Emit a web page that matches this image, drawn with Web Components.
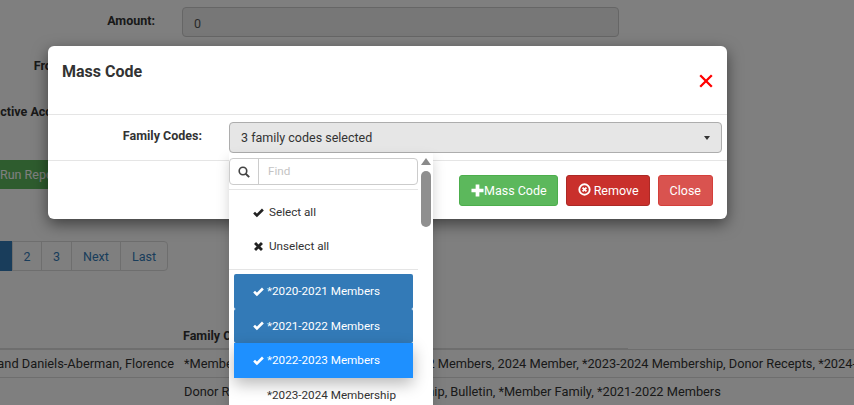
<!DOCTYPE html>
<html><head><meta charset="utf-8">
<style>
html,body{margin:0;padding:0;height:405px;width:854px;overflow:hidden;background:#fff;font-family:Roboto,"Liberation Sans",sans-serif;font-size:12.5px;color:#333}
</style></head><body>
<mc-app>
  <mc-page>
    <mc-form-row label="Amount:" top="7"><mc-field>0</mc-field></mc-form-row>
    <mc-form-row label="From Family Groups:" top="15" nudge="5"></mc-form-row>
    <mc-form-row label="Inactive Accounts To Include:" top="17" nudge="7"></mc-form-row>
    <mc-run-button>Run Report</mc-run-button>
    <mc-pagination></mc-pagination>
    <mc-results></mc-results>
  </mc-page>
  <mc-backdrop></mc-backdrop>
  <mc-modal heading="Mass Code"></mc-modal>
</mc-app>
<script>
const ICONS={
 ok:'<path d="M1.4 7.2 5 10.8 12.6 3.2" fill="none" stroke="currentColor" stroke-width="3.3"/>',
 x:'<path d="M2.6 2.6 11.4 11.4M11.4 2.6 2.6 11.4" fill="none" stroke="currentColor" stroke-width="3.6"/>',
 close:'<path d="M1.2 1.2 12.8 12.8M12.8 1.2 1.2 12.8" fill="none" stroke="currentColor" stroke-width="2.3"/>',
 search:'<circle cx="5.8" cy="5.8" r="4.4" fill="none" stroke="currentColor" stroke-width="1.9"/><path d="M8.9 8.9 13 13" stroke="currentColor" stroke-width="2.4"/>',
 plus:'<path d="M7 0.5V13.5M0.5 7H13.5" fill="none" stroke="currentColor" stroke-width="4"/>',
 rc:'<circle cx="7" cy="7" r="5.6" fill="none" stroke="currentColor" stroke-width="2"/><path d="M4.9 4.9 9.1 9.1M9.1 4.9 4.9 9.1" stroke="currentColor" stroke-width="1.9"/>'
};
function def(name,css,html,init){
  customElements.define(name,class extends HTMLElement{
    constructor(){super();this.attachShadow({mode:'open'});}
    connectedCallback(){
      const a=n=>this.getAttribute(n);
      this.shadowRoot.innerHTML='<style>'+css+'</style>'+(typeof html==='function'?html(a):html);
      if(init)init(this,a);
    }
  });
}
def('mc-icon',':host{display:inline-flex;flex:none}svg{display:block;width:100%;height:100%}',
  a=>`<svg viewBox="0 0 14 14" aria-hidden="true">${ICONS[a('name')]}</svg>`);
def('mc-app',':host{display:block;position:relative;width:854px;height:405px;overflow:hidden}','<slot></slot>');
def('mc-page',':host{display:flex;flex-direction:column;height:405px}','<slot></slot>');
def('mc-form-row',`:host{display:grid;grid-template-columns:155px 437px;column-gap:27px;height:30px;align-items:start}
 .l{font-weight:700;white-space:nowrap;line-height:27px}
 .w{display:flex;justify-content:flex-end;width:155px}`,
  a=>`<div class="w"><div class="l" style="padding-right:${a('nudge')||0}px">${a('label')}</div></div><div><slot></slot></div>`,
  (e,a)=>{e.style.marginTop=a('top')+'px';});
def('mc-field',':host{display:block;box-sizing:border-box;height:30px;padding:0 11px;line-height:31px;background:#eee;border:1px solid #ccc;border-radius:4px;color:#555}','<slot></slot>');
def('mc-run-button',`:host{display:flex;align-items:center;box-sizing:border-box;width:110px;height:30px;margin:32px 0 0 -12px;padding-left:12px;background:#5cb85c;color:#fff;border-radius:3px;white-space:nowrap}`,'<slot></slot>');
def('mc-pagination',`:host{display:flex;height:30px;margin-top:52px;margin-left:-20px;width:max-content}
 a{display:block;box-sizing:border-box;height:30px;line-height:29px;border:1px solid #ddd;margin-left:-1px;text-align:center;color:#337ab7;background:#fff}
 a.on{background:#337ab7;border-color:#337ab7;width:33px;margin-left:0;border-radius:4px 0 0 4px}
 a:last-child{border-radius:0 4px 4px 0}`,
 `<a class="on"></a><a style="width:30px">2</a><a style="width:31px">3</a><a style="width:50px">Next</a><a style="width:48px">Last</a>`);
def('mc-results',`:host{display:block;margin-top:56px;white-space:nowrap;font-size:12.8px}
 .h{height:21px;padding-left:183px;font-weight:700;line-height:17px;font-size:12.5px;border-bottom:2px solid #ddd;width:445px}
 .r{display:grid;grid-template-columns:174px 1fr;column-gap:10px;box-sizing:border-box;height:28px;line-height:27px;border-top:1px solid #ddd;margin-top:-1px}
 .r+.r{margin-top:0}
 .n{overflow:hidden;display:flex;justify-content:flex-end}`,
 `<div class="h">Family Codes</div>
  <div class="r"><div class="n"><span>Aberman, Jeffrey and Daniels-Aberman, Florence</span></div><div>*Member Family, Bulletin, Email, *2021-2022 Members, 2024 Member, *2023-2024 Membership, Donor Recepts, *2024-2025 Membership</div></div>
  <div class="r"><div class="n"></div><div>Donor Recepts, Mail, *2023-2024 Membership, Bulletin, *Member Family, *2021-2022 Members</div></div>`);
def('mc-backdrop',':host{position:absolute;inset:0;background:rgba(0,0,0,.5)}','');
def('mc-button',`:host{display:inline-flex;align-items:center;box-sizing:border-box;height:31px;border-radius:3px;color:#fff;border:1px solid transparent;white-space:nowrap;padding:0 11px}`,
 '<slot></slot>',(e,a)=>{e.style.background=a('bg');e.style.borderColor=a('line');});
def('mc-modal',`:host{position:absolute;left:48px;top:46px;width:679px;height:173px;box-sizing:border-box;background:#fff;border-radius:6px;box-shadow:0 5px 15px rgba(0,0,0,.5);display:flex;flex-direction:column}
 header{height:69px;box-sizing:border-box;border-bottom:1px solid #e5e5e5;display:flex;justify-content:space-between;padding:0 14px}
 h4{margin:16px 0 0;font-size:16px;font-weight:700;line-height:20px}
 header mc-icon{width:14px;height:14px;margin:28px 0 0 0;color:#f00}
 .b{height:46px;border-bottom:1px solid #e5e5e5;display:grid;grid-template-columns:154px 493px;column-gap:27px;box-sizing:border-box;padding-top:7px}
 label{text-align:right;font-weight:700;line-height:27px}
 footer{display:flex;justify-content:flex-end;gap:8px;padding:14px 14px 0 0}
 mc-button mc-icon{width:13px;height:13px}`,
 a=>`<header><h4>${a('heading')}</h4><mc-icon name="close"></mc-icon></header>
 <div class="b"><label>Family Codes:</label><mc-multiselect></mc-multiselect></div>
 <footer>
  <mc-button bg="#5cb85c" line="#4cae4c" style="padding-right:10px"><mc-icon name="plus"></mc-icon>Mass Code</mc-button>
  <mc-button bg="#c9302c" line="#ac2925" style="padding-right:10px"><mc-icon name="rc" style="margin:-2px 3px 0 0"></mc-icon>Remove</mc-button>
  <mc-button bg="#d9534f" line="#d43f3a">Close</mc-button>
 </footer>`);
def('mc-option',`:host{display:flex;align-items:center;box-sizing:border-box;padding-left:19px;white-space:nowrap;height:34.5px}
 mc-icon{width:11px;height:11px;margin-right:3px}
 .s{width:14px;flex:none}`,
 a=>`${a('check')!==null?'<mc-icon name="ok"></mc-icon>':'<span class="s"></span>'}<slot></slot>`);
def('mc-multiselect',`:host{display:block;position:relative;height:31px}
 .t{box-sizing:border-box;height:31px;background:#e6e6e6;border:1px solid #adadad;border-radius:4px;display:flex;align-items:center;justify-content:space-between;padding:0 11px 0 11px}
 .c{width:0;height:0;border:3px solid transparent;border-top:4px solid #333;border-bottom:0}
 .m{position:absolute;left:0;top:31px;width:204px;height:260px;background:#fff;box-shadow:0 6px 12px rgba(0,0,0,.175);overflow:hidden;font-size:11.7px}
 .i{width:189px;display:flex;flex-direction:column}
 .f{display:flex;box-sizing:border-box;height:27px;margin-top:5px;border:1px solid #ccc;border-radius:4px}
 .g{width:28px;border-right:1px solid #ccc;display:flex;align-items:center;justify-content:center;color:#444}
 .g mc-icon{width:12px;height:12px}
 .p{padding:0 0 0 9px;line-height:25px;color:#c4c4c4}
 hr{margin:0;border:0;border-top:1px solid #e5e5e5;height:0}
 .a{display:flex;align-items:center;height:34px;padding-left:24px}
 .a mc-icon{width:11px;height:11px;margin-right:5px;color:#222}
 .l{display:flex;flex-direction:column;padding:4px 5px 0 5px}
 .act{background:#337ab7;color:#fff;border-radius:2px}
 .hov{background:#1e90ff;color:#fff;box-shadow:0 6px 16px rgba(0,0,0,.28);position:relative;z-index:1;height:35px;padding-bottom:1px}
 .sb{position:absolute;left:192px;top:5px;width:10px}
 .up{width:0;height:0;margin:0 auto;border:5px solid transparent;border-bottom:7px solid #8a8a8a;border-top:0}
 .th{width:10px;height:56px;margin-top:6px;border-radius:5px;background:#8f8f8f}`,
 `<div class="t"><span>3 family codes selected</span><span class="c"></span></div>
  <div class="m"><div class="i">
   <div class="f"><div class="g"><mc-icon name="search"></mc-icon></div><div class="p">Find</div></div>
   <hr style="margin-top:4px;margin-bottom:5px">
   <div class="a"><mc-icon name="ok"></mc-icon>Select all</div>
   <div class="a" style="margin-bottom:6px"><mc-icon name="x"></mc-icon>Unselect all</div>
   <hr>
   <div class="l">
    <mc-option check class="act">*2020-2021 Members</mc-option>
    <mc-option check class="act">*2021-2022 Members</mc-option>
    <mc-option check class="hov">*2022-2023 Members</mc-option>
    <mc-option style="height:34px">*2023-2024 Membership</mc-option>
   </div></div>
   <div class="sb"><div class="up"></div><div class="th"></div></div>
  </div>`);
</script>
</body></html>
